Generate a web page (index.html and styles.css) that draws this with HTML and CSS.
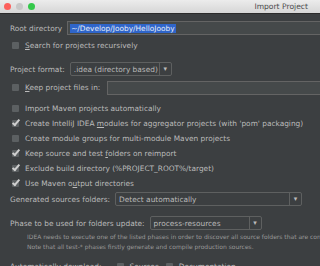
FILE: index.html
```html
<!DOCTYPE html>
<html lang="en">
<head>
    <meta charset="UTF-8">
    <title>Import Project</title>
    <link rel="stylesheet" href="styles.css">
</head>
<body>
    <div class="window">
        <div class="titlebar">
            <span class="light red"></span>
            <span class="light gray"></span>
            <span class="light green"></span>
            <span class="title">Import Project</span>
        </div>

        <div class="content">
            <div class="row root-row">
                <span class="label">Root directory</span>
                <div class="field wide"><span class="selected">~/Develop/Jooby/HelloJooby</span></div>
            </div>

            <label class="check-row search-row"><span class="box"></span><span><u>S</u>earch for projects recursively</span></label>

            <div class="row format-row">
                <span class="label">Project format:</span>
                <div class="combo format-combo"><span>.idea (directory based)</span><span class="arrow">&#9662;</span></div>
            </div>

            <div class="row keep-row">
                <label class="check-row inline"><span class="box"></span><span><u>K</u>eep project files in:</span></label>
                <div class="field wide"></div>
            </div>

            <div class="options">
                <label class="check-row"><span class="box"></span><span>Import Maven projects automatically</span></label>
                <label class="check-row"><span class="box on"></span><span>Create IntelliJ IDEA <u>m</u>odules for aggregator projects (with 'pom' packaging)</span></label>
                <label class="check-row"><span class="box"></span><span>Create module groups for multi-module Maven projects</span></label>
                <label class="check-row"><span class="box on"></span><span>Keep source and test <u>f</u>olders on reimport</span></label>
                <label class="check-row"><span class="box on"></span><span>Exclude build directory (%PROJECT_ROOT%/target)</span></label>
                <label class="check-row"><span class="box on"></span><span>Use Maven o<u>u</u>tput directories</span></label>
            </div>

            <div class="row gen-row">
                <span class="label">Generated sources folders:</span>
                <div class="combo gen-combo"><span>Detect automatically</span><span class="arrow">&#9662;</span></div>
            </div>

            <div class="row phase-row">
                <span class="label">Phase to be used for folders update:</span>
                <div class="combo phase-combo"><span>process-resources</span><span class="arrow">&#9662;</span></div>
            </div>

            <p class="hint">IDEA needs to execute one of the listed phases in order to discover all source folders that are configured via Maven plugins.<br>
            Note that all test-* phases firstly generate and compile production sources.</p>

            <div class="row download-row">
                <span class="label">Automatically download:</span>
                <label class="check-row inline sources"><span class="box"></span><span>Sources</span></label>
                <label class="check-row inline"><span class="box"></span><span>Documentation</span></label>
            </div>
        </div>
    </div>
</body>
</html>
```

FILE: styles.css
```css
body {
    margin: 0;
    background: #3c3f41;
    font-family: "DejaVu Sans", Verdana, sans-serif;
    font-size: 7.4px;
    color: #bbbbbb;
    overflow: hidden;
}
.window {
    width: 320px;
    height: 266px;
    overflow: hidden;
}
.titlebar {
    height: 13px;
    display: flex;
    align-items: center;
    gap: 5px;
    padding-left: 4px;
    background: linear-gradient(#ececec, #d6d6d6);
    border-bottom: 1px solid #2b2b2b;
}
.light {
    width: 7px;
    height: 7px;
    border-radius: 50%;
}
.red { background: #fc605c; }
.gray { background: #c8c8c8; }
.green { background: #34c84a; }
.title {
    margin-left: auto;
    margin-right: 12px;
    color: #4d4d4d;
    font-size: 7.6px;
}
.content {
    padding: 7px 0 0 10px;
    display: flex;
    flex-direction: column;
}
.row {
    display: flex;
    align-items: center;
    white-space: nowrap;
}
.label {
    margin-right: 5px;
}
.field {
    height: 14px;
    background: #45494a;
    border: 1px solid #646464;
    box-sizing: border-box;
    display: flex;
    align-items: center;
    padding-left: 2px;
}
.wide {
    flex: 1;
    margin-right: -4px;
}
.selected {
    background: #2f65ca;
    color: #e8eef8;
    padding: 0 1px;
}
.check-row {
    display: flex;
    align-items: center;
    gap: 6px;
    height: 15px;
    padding-left: 2px;
    white-space: nowrap;
}
.box {
    width: 7px;
    height: 7px;
    background: #5c6062;
    border-radius: 1px;
    position: relative;
    flex-shrink: 0;
}
.box.on::after {
    content: "";
    position: absolute;
    left: 2px;
    top: -2px;
    width: 2px;
    height: 6px;
    border-right: 2px solid #cfcfcf;
    border-bottom: 2px solid #cfcfcf;
    transform: rotate(40deg);
}
.search-row {
    margin-top: 3px;
}
.format-row {
    margin-top: 9px;
}
.combo {
    height: 14px;
    border: 1px solid #5e6060;
    border-radius: 2px;
    box-sizing: border-box;
    display: flex;
    align-items: center;
    justify-content: space-between;
    padding-left: 3px;
}
.arrow {
    width: 11px;
    height: 12px;
    border-left: 1px solid #5e6060;
    display: flex;
    align-items: center;
    justify-content: center;
    font-size: 7px;
}
.format-combo { width: 102px; }
.keep-row {
    margin-top: 4px;
}
.keep-row .check-row {
    margin-right: 7px;
}
.options {
    margin-top: 6px;
}
.gen-row {
    margin-top: 1px;
}
.gen-combo { width: 187px; }
.phase-row {
    margin-top: 10px;
}
.phase-combo { width: 112px; }
.hint {
    margin: 2px 0 0 17px;
    font-size: 6px;
    line-height: 10px;
    white-space: nowrap;
    color: #999999;
}
.download-row {
    margin-top: 7px;
}
.download-row .check-row {
    margin-left: 5px;
}
.download-row .sources {
    margin-left: 8px;
}
```
